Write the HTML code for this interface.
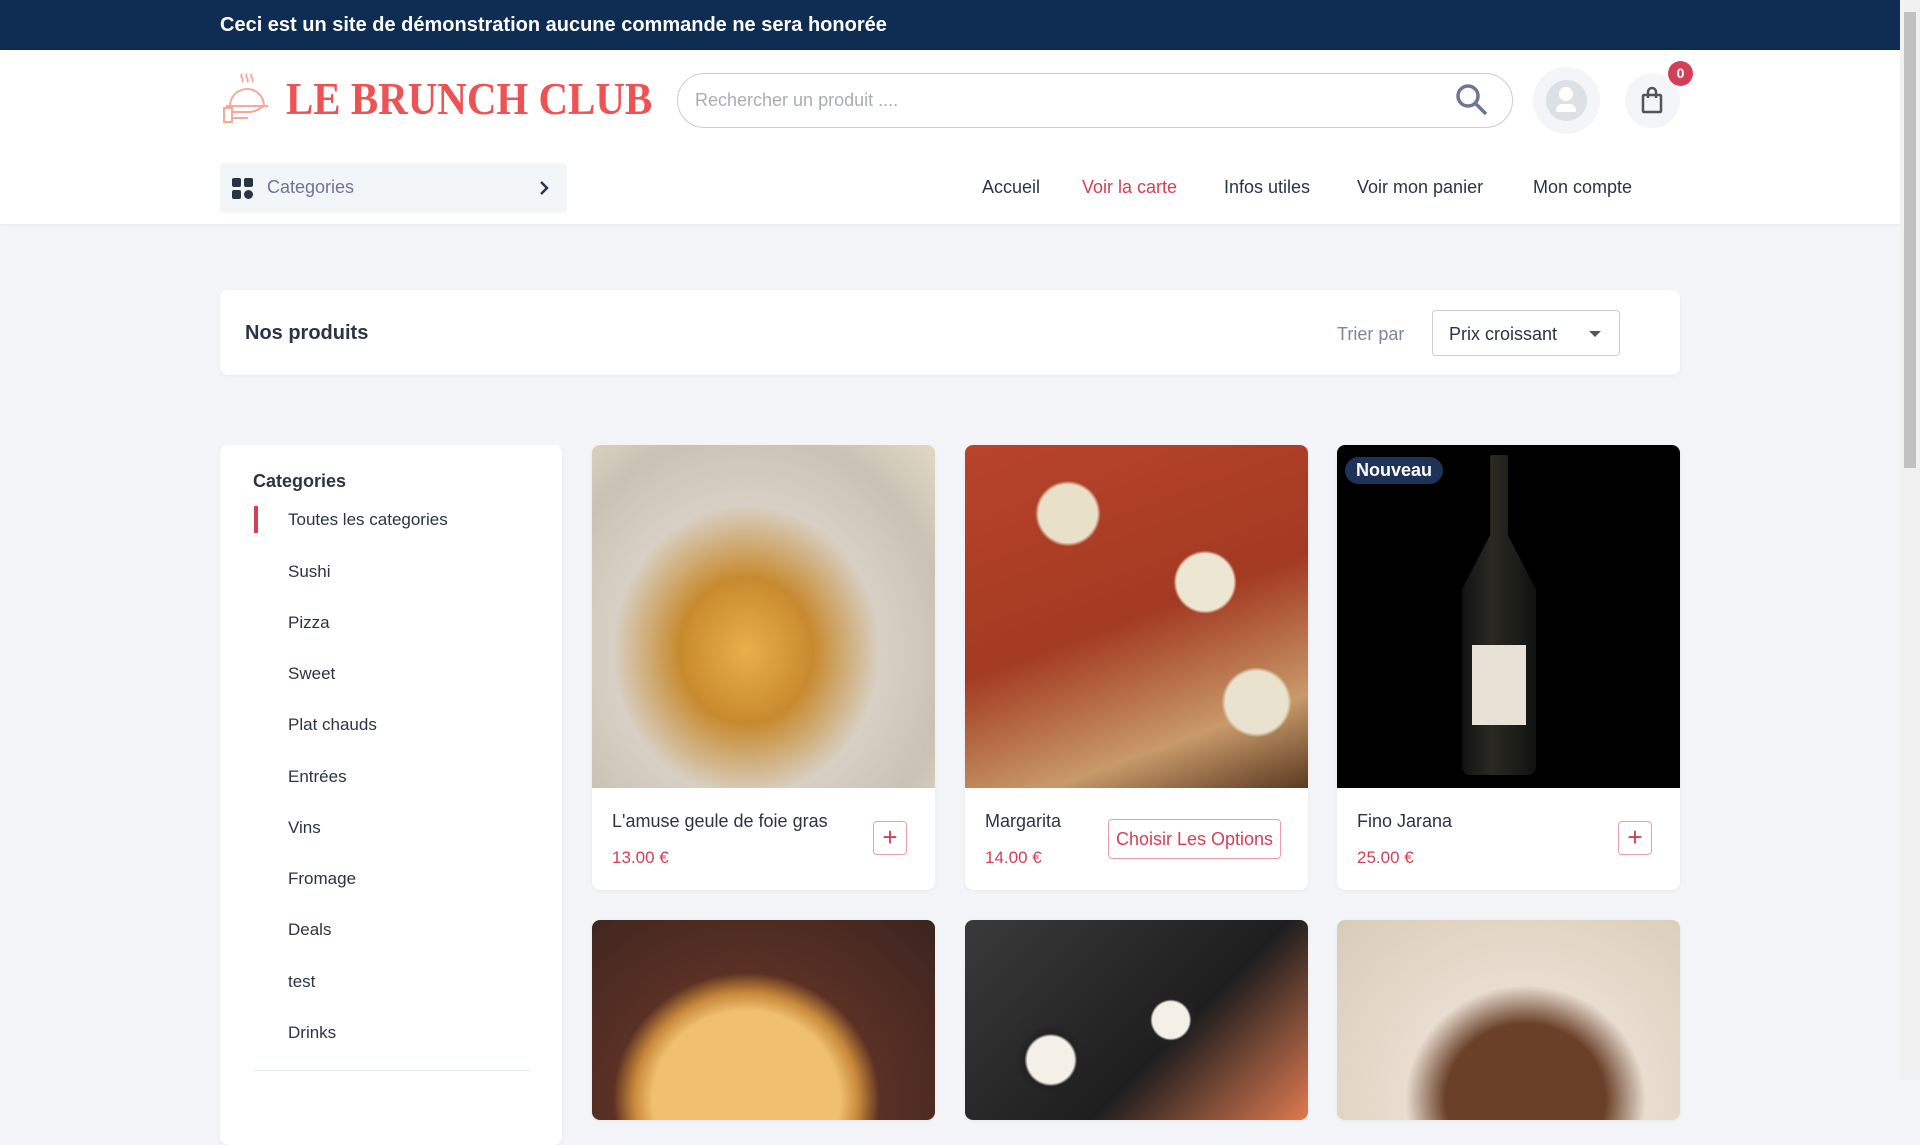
<!DOCTYPE html>
<html><head><meta charset="utf-8"><style>
*{box-sizing:border-box;margin:0;padding:0}
body{width:1920px;height:1080px;overflow:hidden;background:#f3f5f9;font-family:"Liberation Sans",sans-serif;color:#2b3445;position:relative}
.abs{position:absolute}
.top{left:0;top:0;width:1900px;height:50px;background:#0f2d52;color:#fff;font-weight:bold;font-size:20px;line-height:50px;padding-left:220px}
.hdr{left:0;top:50px;width:1900px;height:174px;background:#fff;box-shadow:0 1px 3px rgba(0,0,0,.06)}
.sb{left:1900px;top:0;width:20px;height:1080px;background:#f1f1f1}
.sb i{position:absolute;left:4px;top:12px;width:12px;height:456px;background:#c1c1c1}
.card{background:#fff;border-radius:8px;overflow:hidden;box-shadow:0 1px 3px rgba(3,0,71,.06)}
.nav{top:177px;font-size:18px;color:#2b3445}
.cat{left:288px;font-size:17px;color:#2b3445}
.ttl{font-size:18px;color:#2b3445}
.pr{font-size:17px;color:#d23f57}
.plus{width:34px;height:34px;border:1px solid rgba(210,63,87,.5);border-radius:4px;color:#d23f57;font-size:26px;line-height:30px;text-align:center}
</style></head><body>
<div class="abs top">Ceci est un site de démonstration aucune commande ne sera honorée</div>
<div class="abs hdr"></div>
<svg class="abs" style="left:222px;top:72px" width="48" height="52" viewBox="0 0 48 52" fill="none" stroke="#f7a89a" stroke-width="2"><path d="M20 2c-3 3 3 5 0 8M25 2c-3 3 3 5 0 8M30 2c-3 3 3 5 0 8"/><path d="M8 34a17 17 0 0 1 34 0z"/><path d="M4 34h42"/><rect x="2" y="36" width="8" height="14"/><path d="M10 40h18c6 0 10-4 14-6M10 46h16"/></svg>
<div class="abs" style="left:286px;top:71px;font-family:'Liberation Serif',serif;font-weight:bold;font-size:46px;color:#ee5354;line-height:55px;transform:scaleX(0.89);transform-origin:0 0;white-space:nowrap">LE BRUNCH CLUB</div>
<div class="abs" style="left:677px;top:73px;width:836px;height:55px;border:1px solid #c9ccd2;border-radius:28px;background:#fff"></div>
<div class="abs" style="left:695px;top:90px;font-size:18px;color:#a8adb6">Rechercher un produit ....</div>
<svg class="abs" style="left:1454px;top:82px" width="36" height="36" viewBox="0 0 36 36" fill="none" stroke="#6b7690" stroke-width="3.5"><circle cx="14" cy="14" r="10"/><path d="M21.5 21.5L32 32"/></svg>
<div class="abs" style="left:1533px;top:67px;width:67px;height:67px;border-radius:50%;background:#f3f5f9"></div>
<div class="abs" style="left:1546px;top:80px;width:41px;height:41px;border-radius:50%;background:#dae1e7"></div>
<div class="abs" style="left:1559px;top:87px;width:14px;height:14px;border-radius:50%;background:#fff"></div>
<div class="abs" style="left:1556px;top:104px;width:20px;height:8px;border-radius:8px 8px 2px 2px;background:#fff"></div>
<div class="abs" style="left:1625px;top:73px;width:55px;height:55px;border-radius:50%;background:#f3f5f9"></div>
<svg class="abs" style="left:1640px;top:86px" width="24" height="28" viewBox="0 0 24 28" fill="none" stroke="#555" stroke-width="2.5"><rect x="3" y="9" width="18" height="17" rx="1"/><path d="M8 12V6a4 4 0 0 1 8 0v6"/></svg>
<div class="abs" style="left:1668px;top:61px;width:25px;height:25px;border-radius:50%;background:#d23f57;color:#fff;font-size:14px;font-weight:bold;text-align:center;line-height:25px">0</div>
<div class="abs" style="left:220px;top:163px;width:347px;height:50px;background:#f3f6f9;border-radius:4px"></div>
<svg class="abs" style="left:232px;top:178px" width="21" height="21" viewBox="0 0 21 21" fill="#2b3445"><rect x="0" y="0" width="9" height="9" rx="2"/><rect x="12" y="0" width="9" height="9" rx="2"/><rect x="0" y="12" width="9" height="9" rx="2"/><circle cx="16.5" cy="16.5" r="4.5"/></svg>
<div class="abs" style="left:267px;top:177px;font-size:18px;color:#6b7690">Categories</div>
<svg class="abs" style="left:538px;top:180px" width="12" height="16" viewBox="0 0 12 16" fill="none" stroke="#2b3445" stroke-width="2.5"><path d="M3 2l6 6-6 6"/></svg>
<div class="abs nav" style="left:982px">Accueil</div>
<div class="abs nav" style="left:1082px;color:#d23f57">Voir la carte</div>
<div class="abs nav" style="left:1224px">Infos utiles</div>
<div class="abs nav" style="left:1357px">Voir mon panier</div>
<div class="abs nav" style="left:1533px">Mon compte</div>

<div class="abs card" style="left:220px;top:290px;width:1460px;height:85px"></div>
<div class="abs" style="left:245px;top:322px;font-size:20px;font-weight:bold;color:#2b3445">Nos produits</div>
<div class="abs" style="left:1337px;top:324px;font-size:18px;color:#7d879c">Trier par</div>
<div class="abs" style="left:1432px;top:310px;width:188px;height:46px;border:1px solid #c9ccd2;border-radius:4px;background:#fff"></div>
<div class="abs" style="left:1449px;top:324px;font-size:18px;color:#2b3445">Prix croissant</div>
<div class="abs" style="left:1589px;top:331px;border-left:6px solid transparent;border-right:6px solid transparent;border-top:6px solid #555"></div>

<div class="abs card" style="left:220px;top:445px;width:342px;height:700px"></div>
<div class="abs" style="left:253px;top:471px;font-size:18px;font-weight:bold;color:#2b3445">Categories</div>
<div class="abs" style="left:254px;top:506px;width:4px;height:27px;background:#d23f57"></div>
<div class="abs cat" style="top:510px">Toutes les categories</div>
<div class="abs cat" style="top:562px">Sushi</div>
<div class="abs cat" style="top:613px">Pizza</div>
<div class="abs cat" style="top:664px">Sweet</div>
<div class="abs cat" style="top:715px">Plat chauds</div>
<div class="abs cat" style="top:767px">Entrées</div>
<div class="abs cat" style="top:818px">Vins</div>
<div class="abs cat" style="top:869px">Fromage</div>
<div class="abs cat" style="top:920px">Deals</div>
<div class="abs cat" style="top:972px">test</div>
<div class="abs cat" style="top:1023px">Drinks</div>
<div class="abs" style="left:254px;top:1070px;width:276px;height:1px;background:#e3e9ef"></div>

<div class="abs card" style="left:592px;top:445px;width:343px;height:445px">
 <div style="height:343px;background:radial-gradient(ellipse at 45% 60%,#e8b04a 0%,#c88a2e 25%,#d8d0c4 50%,#c9c2b5 75%,#e2d9c4 100%)"></div></div>
<div class="abs card" style="left:965px;top:445px;width:343px;height:445px">
 <div style="height:343px;background:radial-gradient(circle at 30% 20%,#e8e0c8 0 8%,transparent 9%),radial-gradient(circle at 70% 40%,#ede6d2 0 9%,transparent 10%),radial-gradient(circle at 85% 75%,#e9e2ce 0 8%,transparent 9%),linear-gradient(160deg,#b8442a,#a33a22 50%,#c89a6a 80%,#5a3a20)"></div></div>
<div class="abs card" style="left:1337px;top:445px;width:343px;height:445px">
 <div style="height:343px;background:#000;position:relative">
  <div style="position:absolute;left:125px;top:10px;width:74px;height:320px;background:linear-gradient(90deg,#111,#2a2a22 40%,#111);border-radius:30px 30px 8px 8px;clip-path:polygon(38% 0,62% 0,62% 25%,100% 42%,100% 100%,0 100%,0 42%,38% 25%)"></div>
  <div style="position:absolute;left:135px;top:200px;width:54px;height:80px;background:#e8e2d6"></div>
  <div style="position:absolute;left:8px;top:12px;background:#1f3358;color:#fff;font-size:18px;font-weight:bold;padding:3px 11px;border-radius:16px">Nouveau</div>
 </div></div>
<div class="abs ttl" style="left:612px;top:811px">L'amuse geule de foie gras</div>
<div class="abs pr" style="left:612px;top:848px">13.00 €</div>
<div class="abs plus" style="left:873px;top:821px">+</div>
<div class="abs ttl" style="left:985px;top:811px">Margarita</div>
<div class="abs pr" style="left:985px;top:848px">14.00 €</div>
<div class="abs" style="left:1108px;top:819px;width:173px;height:40px;border:1px solid rgba(210,63,87,.5);border-radius:4px;color:#d23f57;font-size:18px;text-align:center;line-height:38px">Choisir Les Options</div>
<div class="abs ttl" style="left:1357px;top:811px">Fino Jarana</div>
<div class="abs pr" style="left:1357px;top:848px">25.00 €</div>
<div class="abs plus" style="left:1618px;top:821px">+</div>

<div class="abs card" style="left:592px;top:920px;width:343px;height:200px;background:radial-gradient(ellipse at 45% 90%,#f0c070 0 35%,#c98a3a 42%,#5a3024 50%,#3a2420 100%)"></div>
<div class="abs card" style="left:965px;top:920px;width:343px;height:200px;background:radial-gradient(circle at 25% 70%,#f4f0e8 0 8%,#222 9%,transparent 12%),radial-gradient(circle at 60% 50%,#f4f0e8 0 8%,#222 9%,transparent 12%),linear-gradient(135deg,#3a3a3a,#1e1e1e 60%,#e07a50)"></div>
<div class="abs card" style="left:1337px;top:920px;width:343px;height:200px;background:radial-gradient(ellipse at 55% 90%,#6a4028 0 30%,#e8ddd0 45%,#d8cbb8 100%)"></div>
<div class="abs sb"><i></i></div>
</body></html>
